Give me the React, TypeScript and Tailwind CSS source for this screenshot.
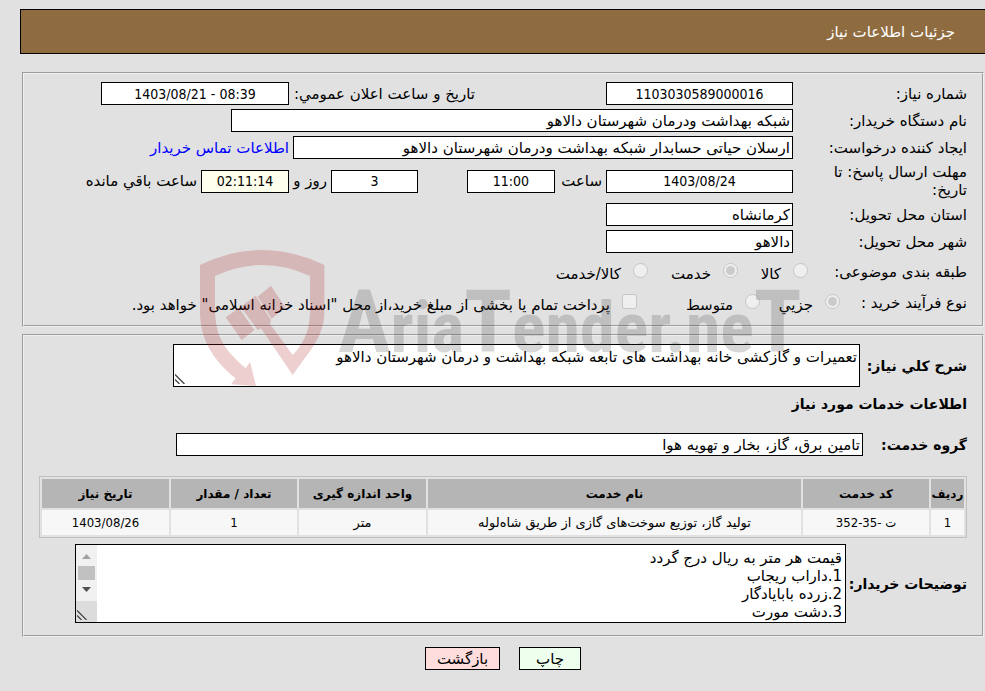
import { useId, type ReactNode } from "react"
import clsx from "clsx"

const columns = [
    { title: "ردیف", width: "w-[33px]" },
    { title: "کد خدمت", width: "w-[126px]" },
    { title: "نام خدمت", width: "" },
    { title: "واحد اندازه گیری", width: "w-[127px]" },
    { title: "تعداد / مقدار", width: "w-[126px]" },
    { title: "تاریخ نیاز", width: "w-[127px]" },
]

const services = [
    ["1", "ت -35-352", "تولید گاز، توزیع سوخت‌های گازی از طریق شاه‌لوله", "متر", "1", "1403/08/26"],
]

const notes = `قیمت هر متر به ریال درج گردد
1.داراب ریجاب
2.زرده بابایادگار
3.دشت مورت`

const digits = "font-['DejaVu_Sans_Condensed',sans-serif] text-[14px] text-center"

function Row({ children, className }: { children: ReactNode; className?: string }) {
    return <div className={clsx("flex items-center gap-1", className)}>{children}</div>
}

function Box({ id, value, label, numeric, className }: { id?: string; value: string; label?: string; numeric?: boolean; className: string }) {
    return (
        <input
            id={id}
            aria-label={label}
            readOnly
            dir={numeric ? "ltr" : "rtl"}
            value={value}
            className={clsx("h-[23px] min-w-0 border border-black px-[2px] outline-none", numeric && digits, className)}
        />
    )
}

function Field({ label, value, numeric, width, children }: { label: string; value: string; numeric?: boolean; width: string; children?: ReactNode }) {
    const id = useId()
    return (
        <Row>
            <label htmlFor={id} className="w-[170px] shrink-0 pl-5">{label}</label>
            <Box id={id} value={value} numeric={numeric} className={clsx("bg-white", width)} />
            {children}
        </Row>
    )
}

function Option({ type, name, label, checked, className }: { type: "radio" | "checkbox"; name: string; label: string; checked?: boolean; className?: string }) {
    return (
        <label className={clsx("flex shrink-0 items-center gap-3", className)}>
            <input type={type} name={name} defaultChecked={checked} disabled className="mb-1 size-[15px] shrink-0" />
            <span className="whitespace-nowrap pt-1">{label}</span>
        </label>
    )
}

function Panel({ children, className }: { children: ReactNode; className?: string }) {
    return (
        <section className={clsx("border-2 border-[#f0f0f0] px-[15px] [border-style:groove]", className)}>
            {children}
        </section>
    )
}

// Resize handle in the corner of a text area
function Grip() {
    return (
        <svg viewBox="0 0 10 10" className="absolute bottom-[3px] left-[2px] size-[10px] fill-none">
            <path d="M0 1.5L8.5 10M0 6.5L3.5 10" stroke="#ffffff" />
            <path d="M0 .5L9.5 10M0 5.5L4.5 10" stroke="#444444" strokeWidth="1.3" />
        </svg>
    )
}

function ScrollBar() {
    return (
        <div aria-hidden="true" className="absolute inset-y-px left-px flex w-[21px] flex-col bg-[#f1f1f1]">
            <svg viewBox="0 0 21 21" className="h-[21px]">
                <path d="M6 14L10.5 9L15 14Z" fill="#a3a3a3" />
            </svg>
            <div className="mx-[2px] h-[14px] bg-[#c1c1c1]" />
            <svg viewBox="0 0 21 21" className="h-[21px]">
                <path d="M6 7L10.5 12L15 7Z" fill="#505050" />
            </svg>
            <div className="flex-1 bg-[#dcdcdc]" />
        </div>
    )
}

function Watermark() {
    return (
        <div dir="ltr" aria-hidden="true" className="pointer-events-none absolute top-[240px] left-[190px] flex opacity-20">
            <svg viewBox="0 0 480 465" className="h-[155px] w-[160px] shrink-0 fill-[#aa1419]">
                <path d="M30 75Q216-15 403 75V215C403 290 360 330 308 405L213 265L203 270L152 200L197 167L243 240L240 252L308 345C350 300 360 260 360 210V108Q216 42 75 108V200C75 290 100 325 167 385L180 366L198 438L123 433L137 415C70 360 30 300 30 215Z" />
                <path d="M203 170L243 137L285 202L245 236ZM107 232L147 204L193 270L155 300Z" />
            </svg>
            <div className="-ml-3 font-['Roboto_Condensed',sans-serif] text-[70px] leading-[164px] font-bold text-[#3c3c3c]">
                <span className="text-[88px]">A</span>ria<span className="text-[88px]">T</span>ender.ne<span className="text-[88px]">T</span>
            </div>
        </div>
    )
}

export default function App() {
    return (
        <main dir="rtl" className="relative min-h-screen overflow-hidden bg-[#e1e1e1] pt-[9px] pb-5 font-['DejaVu_Sans',sans-serif] text-[15px] leading-[18px] text-black">
            <header className="mr-[-1px] ml-5 flex h-[45px] items-center border border-black bg-[#8f6c40] pr-[30px] text-white">
                <h1>جزئیات اطلاعات نیاز</h1>
            </header>

            <div className="mt-[18px] mr-px ml-[22px] flex flex-col gap-[7px]">
                <Panel className="flex flex-col gap-1 pt-2 pb-[10px]">
                    <Field label="شماره نیاز:" value="1103030589000016" numeric width="w-[187px]">
                        <label htmlFor="announced" className="mr-[127px] w-[182px] whitespace-nowrap">تاریخ و ساعت اعلان عمومي:</label>
                        <Box id="announced" value="1403/08/21 - 08:39" numeric className="w-[188px] bg-white" />
                    </Field>
                    <Field label="نام دستگاه خریدار:" value="شبکه بهداشت ودرمان شهرستان دالاهو" width="w-[562px]" />
                    <Field label="ایجاد کننده درخواست:" value="ارسلان حیاتی حسابدار شبکه بهداشت ودرمان شهرستان دالاهو" width="w-[500px]">
                        <a href="#contact" className="whitespace-nowrap text-[#0000ff]">اطلاعات تماس خریدار</a>
                    </Field>
                    <Field label="مهلت ارسال پاسخ: تا تاریخ:" value="1403/08/24" numeric width="w-[187px]">
                        <label htmlFor="hour" className="w-[43px]">ساعت</label>
                        <Box id="hour" value="11:00" numeric className="w-[88px] bg-white" />
                        <Box label="روز" value="3" numeric className="mr-[45px] w-[87px] bg-white" />
                        <span className="w-[34px] whitespace-nowrap">روز و</span>
                        <Box id="left" value="02:11:14" numeric className="w-[88px] bg-[#ffffee]" />
                        <label htmlFor="left" className="whitespace-nowrap">ساعت باقي مانده</label>
                    </Field>
                    <Field label="استان محل تحویل:" value="کرمانشاه" width="w-[187px]" />
                    <Field label="شهر محل تحویل:" value="دالاهو" width="w-[187px]" />
                    <div className="flex h-[30px] items-center">
                        <span className="w-[159px]">طبقه بندی موضوعی:</span>
                        <Option type="radio" name="category" label="کالا" className="w-[70px]" />
                        <Option type="radio" name="category" label="خدمت" checked className="w-[90px]" />
                        <Option type="radio" name="category" label="کالا/خدمت" />
                    </div>
                    <div className="flex h-6 items-center">
                        <span className="w-[127px]">نوع فرآیند خرید :</span>
                        <Option type="radio" name="process" label="جزیي" checked className="w-[80px]" />
                        <Option type="radio" name="process" label="متوسط" className="w-[123px]" />
                        <Option type="checkbox" name="treasury" label="پرداخت تمام یا بخشی از مبلغ خرید،از محل &quot;اسناد خزانه اسلامی&quot; خواهد بود." />
                    </div>
                </Panel>

                <Panel className="pt-2 pb-3">
                    <div className="flex items-center">
                        <label htmlFor="summary" className="w-[107px] text-[14px] font-bold whitespace-nowrap">شرح کلي نیاز:</label>
                        <div className="relative w-[687px]">
                            <textarea id="summary" readOnly className="block h-[43px] w-full resize-none border border-black bg-white px-[2px] py-[3px] outline-none" defaultValue="تعمیرات و گازکشی خانه بهداشت های تابعه شبکه بهداشت و درمان شهرستان دالاهو" />
                            <Grip />
                        </div>
                    </div>
                    <h2 className="mt-2 text-[14px] font-bold">اطلاعات خدمات مورد نیاز</h2>
                    <div className="mt-5 flex items-center">
                        <label htmlFor="group" className="w-[104px] text-[14px] font-bold">گروه خدمت:</label>
                        <Box id="group" value="تامین برق، گاز، بخار و تهویه هوا" className="w-[687px] bg-white" />
                    </div>

                    <table className="mt-5 w-full table-fixed border-separate border-spacing-[2px] border border-[#c0c0c0] text-center">
                        <thead>
                            <tr className="h-[29px] bg-[#b5b5b5] text-[12px]">
                                {columns.map(c => <th key={c.title} className={c.width}>{c.title}</th>)}
                            </tr>
                        </thead>
                        <tbody>
                            {services.map(row => (
                                <tr key={row[0]} className="h-[25px] bg-[#f7f7f7] font-['DejaVu_Sans_Condensed',sans-serif] text-[13px]">
                                    {row.map((cell, i) => <td key={i} className={clsx(i > 1 && i < 4 && "font-['DejaVu_Sans',sans-serif]")}>{cell}</td>)}
                                </tr>
                            ))}
                        </tbody>
                    </table>

                    <div className="mt-[6px] flex items-center">
                        <label htmlFor="notes" className="w-[121px] text-[14px] font-bold whitespace-nowrap">توضیحات خریدار:</label>
                        <div className="relative w-[771px]">
                            <textarea id="notes" readOnly className="block h-[79px] w-full resize-none overflow-y-auto border border-black bg-white py-1 pr-[3px] pl-6 outline-none" defaultValue={notes} />
                            <ScrollBar />
                            <Grip />
                        </div>
                    </div>
                </Panel>
            </div>

            <div className="mt-[10px] ml-[21px] flex justify-center gap-[19px]">
                <button type="button" className="h-[23px] w-[62px] border border-black bg-[#eeffee]">چاپ</button>
                <button type="button" className="h-[23px] w-[75px] border border-black bg-[#ffdddd]">بازگشت</button>
            </div>

            <Watermark />
        </main>
    )
}
